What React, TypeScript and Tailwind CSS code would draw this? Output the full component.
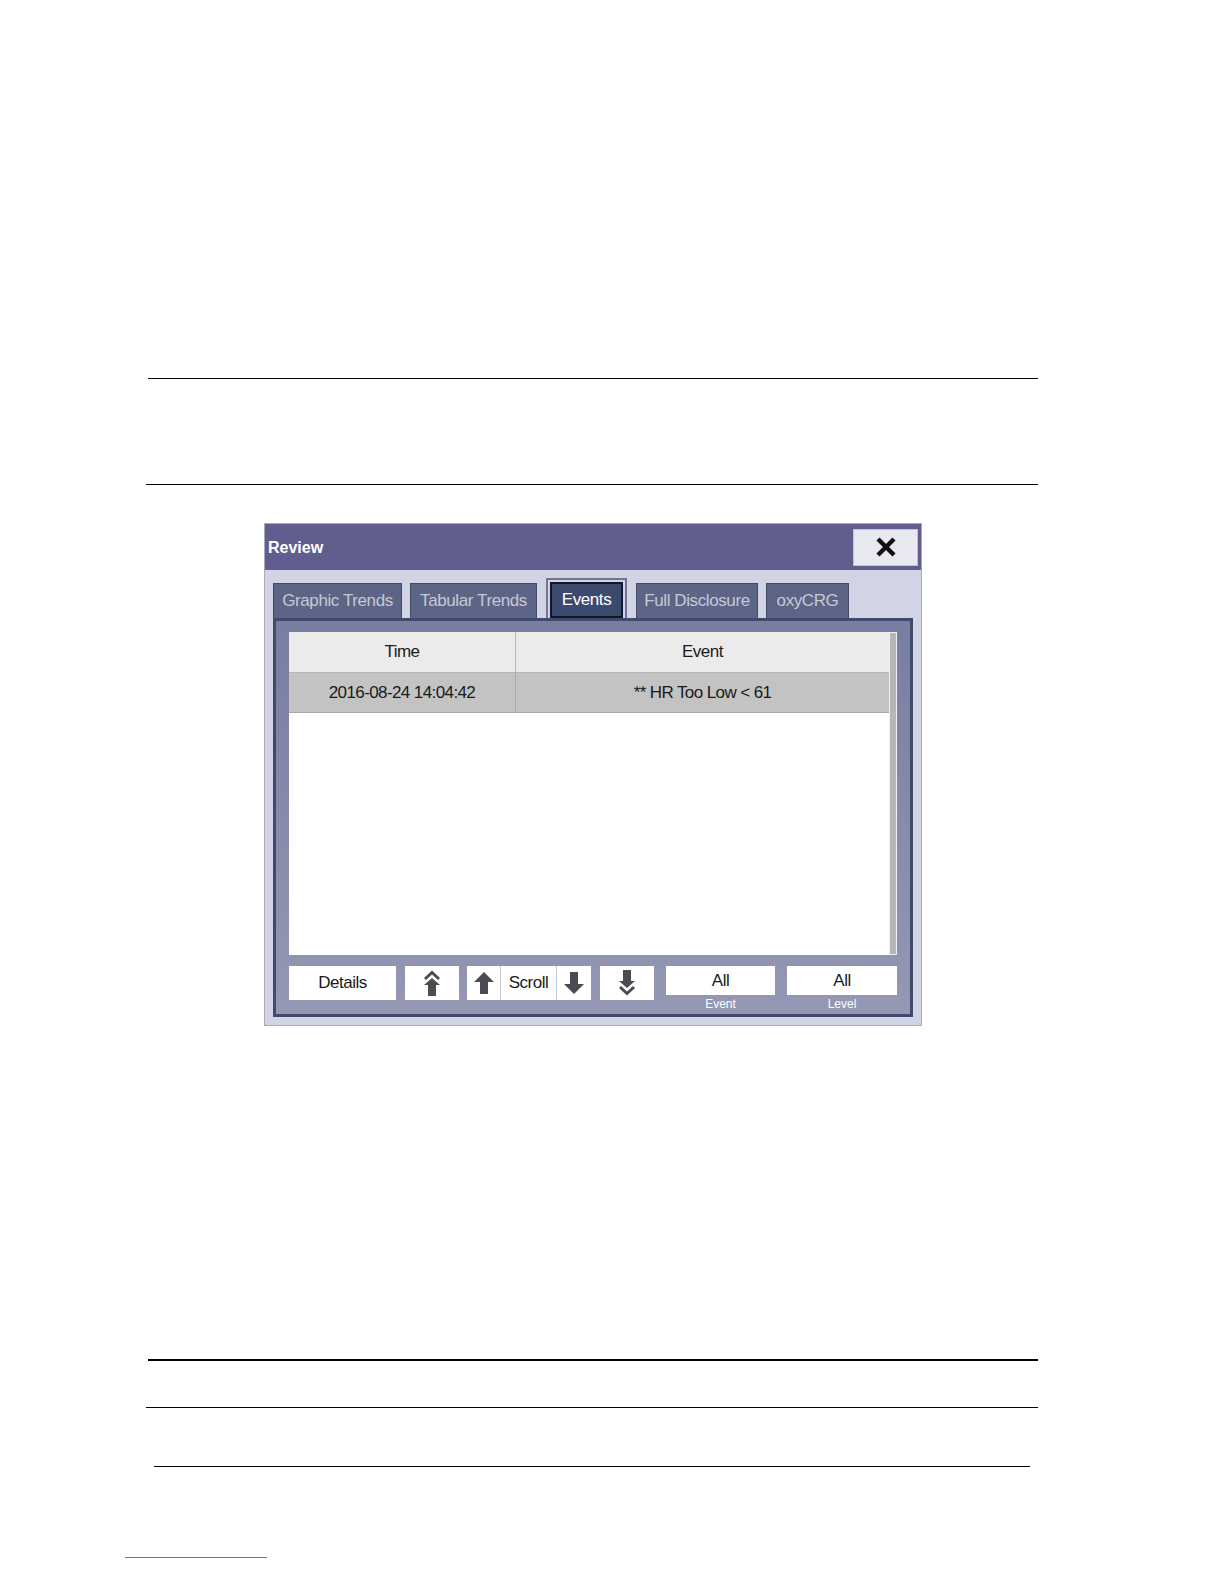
import React from "react";

const font = { fontFamily: '"Liberation Sans", Arial, sans-serif' };

function UpArrow() {
  return (
    <svg width="20" height="22" viewBox="0 0 20 22">
      <path d="M10 0 L20 10 L14 10 L14 22 L6 22 L6 10 L0 10 Z" fill="#4b4b52" />
    </svg>
  );
}
function DownArrow() {
  return (
    <svg width="20" height="22" viewBox="0 0 20 22">
      <path d="M10 22 L20 12 L14 12 L14 0 L6 0 L6 12 L0 12 Z" fill="#4b4b52" />
    </svg>
  );
}
function DoubleUp() {
  return (
    <svg width="20" height="26" viewBox="0 0 20 26">
      <polyline points="3,9 10,2.5 17,9" fill="none" stroke="#4b4b52" strokeWidth="3" />
      <path d="M10 8 L18 15 L14 15 L14 26 L6 26 L6 15 L2 15 Z" fill="#4b4b52" />
    </svg>
  );
}
function DoubleDown() {
  return (
    <svg width="20" height="26" viewBox="0 0 20 26">
      <polyline points="3,17 10,23.5 17,17" fill="none" stroke="#4b4b52" strokeWidth="3" />
      <path d="M10 18 L18 11 L14 11 L14 0 L6 0 L6 11 L2 11 Z" fill="#4b4b52" />
    </svg>
  );
}

function Tab({ label, w, ml }: { label: string; w: string; ml: string }) {
  return (
    <div
      className={`${w} ${ml} h-[35px] bg-[#5d6586] border border-[#434b6b] border-b-0 flex items-center justify-center text-[17px] text-[#c6c9d6] tracking-[-0.4px]`}
    >
      {label}
    </div>
  );
}

export default function App() {
  return (
    <div className="w-[1224px] h-[1584px] bg-white overflow-hidden" style={font}>
      <div className="pt-[378px]">
        <div className="ml-[148px] w-[890px] h-px bg-black" />
        <div className="ml-[146px] w-[892px] h-px bg-black mt-[105px]" />

        {/* Dialog */}
        <div className="ml-[264px] mt-[38px] w-[658px] h-[503px] border border-[#a8aab8] bg-[#d2d4e6] flex flex-col">
          {/* Title bar */}
          <div className="h-[46px] bg-[#615d8f] flex items-center justify-between pl-[3px] pr-[3px]">
            <span className="text-white font-bold text-[16px] pt-[2px]">Review</span>
            <div className="w-[65px] h-[37px] bg-[#e8e8f0] border border-[#c4c4d0] flex items-center justify-center">
              <svg width="22" height="22" viewBox="0 0 22 22">
                <line x1="3" y1="3" x2="19" y2="19" stroke="#111" strokeWidth="4.5" />
                <line x1="19" y1="3" x2="3" y2="19" stroke="#111" strokeWidth="4.5" />
              </svg>
            </div>
          </div>

          {/* Tabs */}
          <div className="flex items-end pl-[8px] mt-[8px] h-[40px]">
            <Tab label="Graphic Trends" w="w-[129px]" ml="ml-0" />
            <Tab label="Tabular Trends" w="w-[127px]" ml="ml-[8px]" />
            <div className="ml-[9px] w-[81px] h-[40px] border-[2px] border-b-0 border-[#6f7592] bg-[#d2d4e6] p-[2px] pb-0 flex">
              <div className="flex-1 bg-[#3d4a6f] border-[2px] border-[#111827] flex items-center justify-center text-[17px] text-white tracking-[-0.4px]">
                Events
              </div>
            </div>
            <Tab label="Full Disclosure" w="w-[122px]" ml="ml-[9px]" />
            <Tab label="oxyCRG" w="w-[83px]" ml="ml-[8px]" />
          </div>

          {/* Panel */}
          <div className="ml-[8px] w-[640px] h-[399px] border-[3px] border-[#414a6c] bg-gradient-to-b from-[#787ea2] to-[#9498b4] pl-[13px] pt-[11px]">
            <div className="flex">
              <div className="w-[600px] h-[323px] bg-white flex flex-col">
                <div className="flex h-[41px] bg-[#ebebeb] border-b border-[#b5b5b5] text-[17px] text-[#1a1a1a] tracking-[-0.5px]">
                  <div className="w-[227px] border-r border-[#b9b9b9] flex items-center justify-center">Time</div>
                  <div className="flex-1 flex items-center justify-center">Event</div>
                </div>
                <div className="flex h-[40px] bg-[#c3c3c3] border-b border-[#a8a8a8] text-[17px] text-[#1a1a1a] tracking-[-0.6px]">
                  <div className="w-[227px] border-r border-[#a9a9a9] flex items-center justify-center">2016-08-24 14:04:42</div>
                  <div className="flex-1 flex items-center justify-center">** HR Too Low &lt; 61</div>
                </div>
              </div>
              <div className="w-[8px] h-[323px] bg-[#b6b6b8] border border-[#f0f0f0]" />
            </div>

            {/* Buttons */}
            <div className="flex items-start mt-[11px] text-[17px] text-[#1a1a1a] tracking-[-0.5px]">
              <div className="w-[107px] h-[34px] bg-white flex items-center justify-center">Details</div>
              <div className="ml-[9px] w-[54px] h-[34px] bg-white flex items-center justify-center">
                <DoubleUp />
              </div>
              <div className="ml-[8px] h-[34px] bg-white flex">
                <div className="w-[34px] flex items-center justify-center border-r border-[#c8c8c8]">
                  <UpArrow />
                </div>
                <div className="w-[56px] flex items-center justify-center border-r border-[#c8c8c8]">Scroll</div>
                <div className="w-[34px] flex items-center justify-center">
                  <DownArrow />
                </div>
              </div>
              <div className="ml-[9px] w-[54px] h-[34px] bg-white flex items-center justify-center">
                <DoubleDown />
              </div>
              <div className="ml-[12px] w-[109px] flex flex-col items-center">
                <div className="w-full h-[29px] bg-white flex items-center justify-center">All</div>
                <div className="text-[12px] text-white tracking-normal mt-[2px] leading-[14px]">Event</div>
              </div>
              <div className="ml-[12px] w-[110px] flex flex-col items-center">
                <div className="w-full h-[29px] bg-white flex items-center justify-center">All</div>
                <div className="text-[12px] text-white tracking-normal mt-[2px] leading-[14px]">Level</div>
              </div>
            </div>
          </div>
        </div>

        <div className="ml-[148px] w-[890px] h-[2px] bg-black mt-[333px]" />
        <div className="ml-[146px] w-[892px] h-px bg-black mt-[46px]" />
        <div className="ml-[154px] w-[876px] h-px bg-black mt-[58px]" />
        <div className="ml-[125px] w-[142px] h-px bg-[#5b6fd6] mt-[90px]" />
      </div>
    </div>
  );
}
